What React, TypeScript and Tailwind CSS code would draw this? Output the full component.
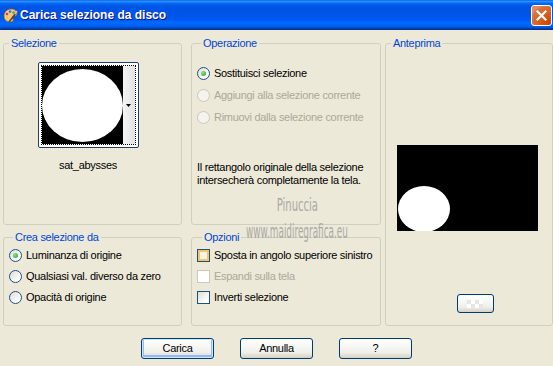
function Radio({ checked = false, disabled = false }: { checked?: boolean; disabled?: boolean }) {
  return (
    <span
      className={`flex h-[13px] w-[13px] shrink-0 items-center justify-center rounded-full border ${
        disabled
          ? "border-[#cac8bb] bg-[#f4f3ee]"
          : "border-[#1c5180] bg-[linear-gradient(135deg,#dcdcd7,#ffffff_80%)]"
      }`}
    >
      {checked && <span className="h-[5px] w-[5px] rounded-full bg-[radial-gradient(circle_at_35%_35%,#8be088,#21a121)]" />}
    </span>
  );
}

function Check({ hot = false, disabled = false }: { hot?: boolean; disabled?: boolean }) {
  return (
    <span
      className={`block h-[13px] w-[13px] shrink-0 border ${
        disabled
          ? "border-[#cac8bb] bg-white"
          : hot
            ? "border-[#1c5180] bg-[#f7f3e6] shadow-[inset_0_0_0_2px_#f5c56a]"
            : "border-[#1c5180] bg-[linear-gradient(135deg,#dcdcd7,#ffffff_80%)]"
      }`}
    />
  );
}

function XpButton({ label, primary = false }: { label: string; primary?: boolean }) {
  return (
    <button
      className={`flex h-[21px] w-[73px] items-center justify-center rounded-[3px] border border-[#003c74] bg-[linear-gradient(to_bottom,#ffffff,#f0f0ea_70%,#d6d0c5)] text-black ${
        primary ? "shadow-[inset_0_0_0_1px_#cee7ff,inset_0_-1px_0_2px_#98b8f5]" : ""
      }`}
    >
      {label}
    </button>
  );
}

function Group({ title, className, children }: { title: string; className: string; children?: React.ReactNode }) {
  return (
    <fieldset className={`min-w-0 rounded-[3px] border border-[#d0d0bf] ${className}`}>
      <legend className="ml-[5px] px-[2px] leading-[13px] text-[#0046d5]">{title}</legend>
      {children}
    </fieldset>
  );
}

export default function App() {
  return (
    <div className="relative h-[366px] w-[553px] overflow-hidden bg-[#ece9d8] font-['Liberation_Sans',Arial,sans-serif] text-[11px] leading-[13px] tracking-[-0.3px] text-black">
      {/* title bar */}
      <div className="flex h-[30px] items-center bg-[linear-gradient(to_bottom,#0058ee_0%,#3593ff_4%,#288eff_6%,#127dff_8%,#036ffc_10%,#0262ee_14%,#0057e5_20%,#0054e3_24%,#0055eb_56%,#005bf5_66%,#026afe_76%,#0062ef_86%,#0052d6_92%,#0040ab_94%,#003092_100%)] pl-[2px] pr-[1px]">
        <svg width="16" height="16" viewBox="0 0 16 16" className="mr-[1px] shrink-0">
          <path d="M2 9c0-4 3-7 7-7s6 2 6 5c0 2-2 2-3 2s-2 1-1 3c1 2-1 3-3 3-3 0-6-2-6-6z" fill="#f2c98a" stroke="#8a5a2a" strokeWidth="0.8" />
          <circle cx="5" cy="7" r="1.3" fill="#e23b2e" />
          <circle cx="8" cy="4.6" r="1.3" fill="#2d7be0" />
          <circle cx="11.5" cy="5.5" r="1.2" fill="#3cae3c" />
          <circle cx="5" cy="11" r="1.3" fill="#f0d020" />
          <path d="M7 15l7-9" stroke="#6b3f1d" strokeWidth="1.6" />
          <path d="M13 7l2-3" stroke="#c0c0c0" strokeWidth="1.6" />
        </svg>
        <span className="ml-[1px] text-[12px] font-bold tracking-normal text-white [text-shadow:1px_1px_#0f1089]">
          Carica selezione da disco
        </span>
        <div className="ml-auto flex h-[21px] w-[21px] items-center justify-center rounded-[3px] border border-white bg-[radial-gradient(circle_at_90%_90%,#cc4600_0%,#dc6527_55%,#cd7546_70%,#ee8d5a_85%,#e36f3a_100%)]">
          <svg width="13" height="13" viewBox="0 0 13 13">
            <path d="M2.5 2.5l8 8M10.5 2.5l-8 8" stroke="white" strokeWidth="2.2" strokeLinecap="square" />
          </svg>
        </div>
      </div>

      {/* body */}
      <div className="flex pl-[3px] pt-[7px]">
        <div className="grid grid-cols-[179px_190px] grid-rows-[188px_95px] gap-x-[9px] gap-y-[6px]">
          <Group title="Selezione" className="flex flex-col items-center pr-[9px]">
            <div className="mt-[12px] flex h-[86px] w-[101px] rounded-[2px] border border-[#1c3f73] bg-white p-[2px]">
              <div className="flex flex-1 border border-dotted border-black">
                <div className="flex flex-1 items-center justify-center bg-black">
                  <div className="h-[73px] w-full rounded-[50%] bg-white" />
                </div>
                <div className="flex w-[12px] flex-col items-center justify-center bg-[linear-gradient(to_right,#f4f4f4,#e3e3e3)]">
                  <svg width="5" height="3" viewBox="0 0 5 3">
                    <path d="M0 0h5L2.5 3z" fill="black" />
                  </svg>
                </div>
              </div>
            </div>
            <div className="mt-[11px]">sat_abysses</div>
          </Group>

          <Group title="Operazione" className="flex flex-col pl-[4px] pt-[12px]">
            <div className="flex h-[22px] items-center gap-[4px] pl-[1px]">
              <Radio checked />
              <span>Sostituisci selezione</span>
            </div>
            <div className="flex h-[22px] items-center gap-[4px] pl-[1px] text-[#aca899]">
              <Radio disabled />
              <span>Aggiungi alla selezione corrente</span>
            </div>
            <div className="flex h-[22px] items-center gap-[4px] pl-[1px] text-[#aca899]">
              <Radio disabled />
              <span>Rimuovi dalla selezione corrente</span>
            </div>
            <p className="mt-[33px] pl-[1px]">
              Il rettangolo originale della selezione
              <br />
              intersecherà completamente la tela.
            </p>
          </Group>

          <Group title="Crea selezione da" className="flex flex-col pl-[4px] pt-[1px]">
            <div className="flex h-[21px] items-center gap-[4px] pl-[1px]">
              <Radio checked />
              <span>Luminanza di origine</span>
            </div>
            <div className="flex h-[21px] items-center gap-[4px] pl-[1px]">
              <Radio />
              <span>Qualsiasi val. diverso da zero</span>
            </div>
            <div className="flex h-[21px] items-center gap-[4px] pl-[1px]">
              <Radio />
              <span>Opacità di origine</span>
            </div>
          </Group>

          <Group title="Opzioni" className="flex flex-col pl-[5px] pt-[1px]">
            <div className="flex h-[21px] items-center gap-[4px] whitespace-nowrap">
              <Check hot />
              <span>Sposta in angolo superiore sinistro</span>
            </div>
            <div className="flex h-[21px] items-center gap-[4px] text-[#aca899]">
              <Check disabled />
              <span>Espandi sulla tela</span>
            </div>
            <div className="flex h-[21px] items-center gap-[4px]">
              <Check />
              <span>Inverti selezione</span>
            </div>
          </Group>
        </div>

        <Group title="Anteprima" className="ml-[4px] flex h-[289px] w-[168px] flex-col items-center">
          <svg width="141" height="86" viewBox="0 0 141 86" className="mr-[3px] mt-[95px] block">
            <rect width="141" height="86" fill="black" />
            <ellipse cx="27" cy="64" rx="26" ry="23" fill="white" />
          </svg>
          <div className="ml-[12px] mt-[63px] flex h-[19px] w-[37px] items-center justify-center rounded-[3px] border border-[#003c74] bg-[linear-gradient(to_bottom,#ffffff,#f0f0ea_70%,#d6d0c5)]">
            <div className="grid grid-cols-4 grid-rows-2">
              <span className="h-[4px] w-[4px] bg-[#e6e6e6]" />
              <span className="h-[4px] w-[4px] bg-white" />
              <span className="h-[4px] w-[4px] bg-[#e6e6e6]" />
              <span className="h-[4px] w-[4px] bg-white" />
              <span className="h-[4px] w-[4px] bg-white" />
              <span className="h-[4px] w-[4px] bg-[#e6e6e6]" />
              <span className="h-[4px] w-[4px] bg-white" />
              <span className="h-[4px] w-[4px] bg-[#e6e6e6]" />
            </div>
          </div>
        </Group>
      </div>

      {/* buttons */}
      <div className="mt-[12px] flex justify-center gap-[26px]">
        <XpButton label="Carica" primary />
        <XpButton label="Annulla" />
        <XpButton label="?" />
      </div>

      {/* watermark */}
      <div className="pointer-events-none absolute left-[229px] top-[196px] flex w-[136px] flex-col items-center font-['DejaVu_Sans_Condensed','DejaVu_Sans',sans-serif] leading-none tracking-normal text-[#9a9a9a] opacity-80">
        <span className="scale-x-[0.62] text-[18px]">Pinuccia</span>
        <span className="mt-[8px] scale-x-[0.52] whitespace-nowrap text-[19px]">www.maidiregrafica.eu</span>
      </div>
    </div>
  );
}
